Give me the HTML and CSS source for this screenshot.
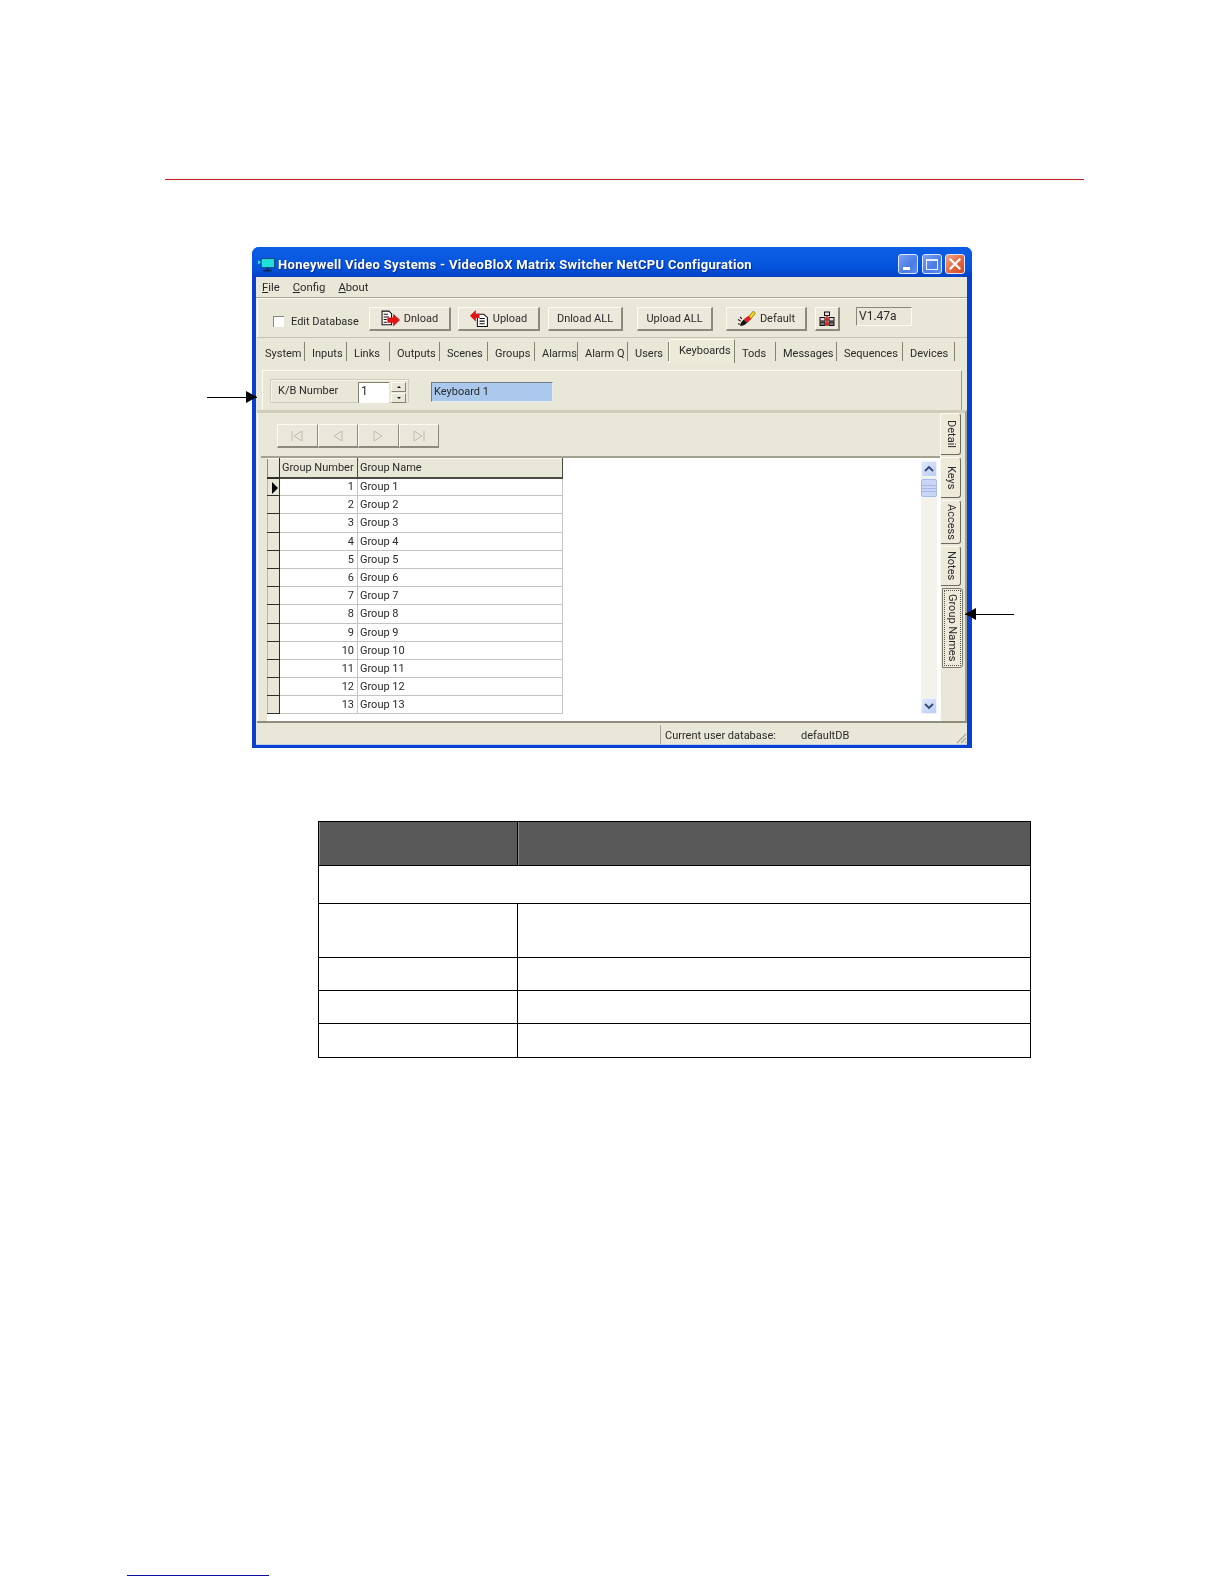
FILE: index.html
```html
<!DOCTYPE html>
<html lang="en">
<head>
<meta charset="utf-8">
<title>VideoBloX Matrix Switcher NetCPU Configuration</title>
<link rel="stylesheet" href="styles.css">
</head>
<body>
<div class="page">
  <div class="rule"></div>

  <div class="window">
    <div class="titlebar">
      <svg class="app-icon" viewBox="0 0 16 13" aria-hidden="true"><path d="M0 2l3 2-3 2z" fill="#3fe0e0"/><rect x="3" y="0.5" width="12.5" height="8.5" fill="#1fe0d8" stroke="#063a70" stroke-width=".8"/><path d="M8 9h2v2h3v1.5H5V11h3z" fill="#062a50"/></svg>
      <span class="title-text">Honeywell Video Systems - VideoBloX Matrix Switcher NetCPU Configuration</span>
      <div class="caption-btns">
        <span class="cap cap-min"><i class="min-glyph"></i></span>
        <span class="cap cap-max"><i class="max-glyph"></i></span>
        <span class="cap cap-close">
          <svg viewBox="0 0 20 20" aria-hidden="true"><path d="M5 5l10 10M15 5L5 15" stroke="#fff" stroke-width="2.4" stroke-linecap="square"/></svg>
        </span>
      </div>
    </div>

    <div class="menu">
      <span class="menu-item"><u>F</u>ile</span>
      <span class="menu-item"><u>C</u>onfig</span>
      <span class="menu-item"><u>A</u>bout</span>
    </div>

    <div class="toolbar">
      <label class="check"><span class="check-box"></span>Edit Database</label>
      <div class="btn w-dn">
        <svg class="btn-icon" viewBox="0 0 18 16" aria-hidden="true"><path d="M1 1h6.500l2.500 2.500V14H1z" fill="#fff" stroke="#111"/><path d="M2.500 4h4M2.500 6.500h5M2.500 9h3M2.500 11.500h3" stroke="#111"/><path d="M6 7h5.500V3.500L18 9.500l-6.500 6v-3.500H6z" fill="#e01414"/></svg>
        Dnload
      </div>
      <div class="btn w-up">
        <svg class="btn-icon" viewBox="0 0 18 16" aria-hidden="true"><path d="M7 4h6l3.500 3v8.500H7z" fill="#fff" stroke="#111"/><path d="M9 8h5M9 10.500h5M9 13h5" stroke="#111"/><path d="M0 5.500L5.500 0v3.500H9v4H5.500V11z" fill="#e01414"/></svg>
        Upload
      </div>
      <div class="btn w-dnall">Dnload ALL</div>
      <div class="btn w-upall">Upload ALL</div>
      <div class="btn w-def">
        <svg class="btn-icon" viewBox="0 0 18 16" aria-hidden="true"><path d="M11 6l4.500-5 2 2L13 8.500z" fill="#f4d21c" stroke="#6d5a00" stroke-width=".6"/><path d="M6.500 8.500L11 5.500 13.500 8.500l-4 4z" fill="#e02020"/><path d="M3 15c0-2 1-4 3.500-6l3 3c-2 2-4 3-6.500 3z" fill="#111"/><path d="M1 9l2.500 1.500M3 6.500l1.500 2M1 13l2 .5" stroke="#111"/></svg>
        Default
      </div>
      <div class="btn w-net">
        <svg class="net-icon" viewBox="0 0 16 16" aria-hidden="true"><rect x="5.500" y="1" width="5" height="3.500" fill="#ddd" stroke="#111"/><rect x="1" y="6.500" width="5" height="3.500" fill="#ddd" stroke="#111"/><rect x="10" y="6.500" width="5" height="3.500" fill="#ddd" stroke="#111"/><rect x="1" y="11" width="5" height="3.500" fill="#777" stroke="#111"/><rect x="10" y="11" width="5" height="3.500" fill="#777" stroke="#111"/><path d="M8 4.500V15M6 8.500h4M6 13h4" stroke="#e01414" stroke-width="1.600"/></svg>
      </div>
      <div class="version">V1.47a</div>
    </div>

    <div class="tabs">
      <span class="tab">System</span>
      <span class="tab">Inputs</span>
      <span class="tab">Links</span>
      <span class="tab">Outputs</span>
      <span class="tab">Scenes</span>
      <span class="tab">Groups</span>
      <span class="tab">Alarms</span>
      <span class="tab">Alarm Q</span>
      <span class="tab">Users</span>
      <span class="tab tab-active">Keyboards</span>
      <span class="tab">Tods</span>
      <span class="tab">Messages</span>
      <span class="tab">Sequences</span>
      <span class="tab">Devices</span>
    </div>

    <div class="kb-panel">
      <div class="kb-group">
        <span class="kb-label">K/B Number</span>
        <span class="spin-edit">1</span>
        <span class="spin-btns"><i class="spin-btn"><b class="spin-up"></b></i><i class="spin-btn"><b class="spin-down"></b></i></span>
      </div>
      <div class="kb-name">Keyboard 1</div>
    </div>

    <div class="pages">
      <div class="sheet">
        <div class="nav">
          <span class="nav-btn"><svg viewBox="0 0 14 12" aria-hidden="true"><path d="M2 1v10M12 1L4 6l8 5z" fill="none" stroke="#c0bdab"/></svg></span>
          <span class="nav-btn"><svg viewBox="0 0 14 12" aria-hidden="true"><path d="M11 1L3 6l8 5z" fill="none" stroke="#c0bdab"/></svg></span>
          <span class="nav-btn"><svg viewBox="0 0 14 12" aria-hidden="true"><path d="M3 1l8 5-8 5z" fill="none" stroke="#c0bdab"/></svg></span>
          <span class="nav-btn"><svg viewBox="0 0 14 12" aria-hidden="true"><path d="M12 1v10M2 1l8 5-8 5z" fill="none" stroke="#c0bdab"/></svg></span>
        </div>
        <div class="grid-wrap">
          <table class="grid">
            <thead>
              <tr><th class="sel"></th><th class="h-num">Group Number</th><th class="h-name">Group Name</th></tr>
            </thead>
            <tbody>
              <tr><td class="sel"><i class="pointer"></i></td><td class="num">1</td><td>Group 1</td></tr>
              <tr><td class="sel"></td><td class="num">2</td><td>Group 2</td></tr>
              <tr><td class="sel"></td><td class="num">3</td><td>Group 3</td></tr>
              <tr><td class="sel"></td><td class="num">4</td><td>Group 4</td></tr>
              <tr><td class="sel"></td><td class="num">5</td><td>Group 5</td></tr>
              <tr><td class="sel"></td><td class="num">6</td><td>Group 6</td></tr>
              <tr><td class="sel"></td><td class="num">7</td><td>Group 7</td></tr>
              <tr><td class="sel"></td><td class="num">8</td><td>Group 8</td></tr>
              <tr><td class="sel"></td><td class="num">9</td><td>Group 9</td></tr>
              <tr><td class="sel"></td><td class="num">10</td><td>Group 10</td></tr>
              <tr><td class="sel"></td><td class="num">11</td><td>Group 11</td></tr>
              <tr><td class="sel"></td><td class="num">12</td><td>Group 12</td></tr>
              <tr><td class="sel"></td><td class="num">13</td><td>Group 13</td></tr>
            </tbody>
          </table>
          <div class="scrollbar">
            <span class="sb-btn"><svg viewBox="0 0 10 8" aria-hidden="true"><path d="M1 6l4-4 4 4" fill="none" stroke="#34487a" stroke-width="1.800"/></svg></span>
            <span class="sb-thumb"></span>
            <span class="sb-track"></span>
            <span class="sb-btn"><svg viewBox="0 0 10 8" aria-hidden="true"><path d="M1 2l4 4 4-4" fill="none" stroke="#34487a" stroke-width="1.800"/></svg></span>
          </div>
        </div>
      </div>
      <div class="side-tabs">
        <span class="side-tab st-detail">Detail</span>
        <span class="side-tab st-keys">Keys</span>
        <span class="side-tab st-access">Access</span>
        <span class="side-tab st-notes">Notes</span>
        <span class="side-tab st-group"><em class="focus">Group Names</em></span>
      </div>
    </div>

    <div class="status">
      <span class="status-a"></span>
      <span class="status-b">Current user database:</span>
      <span class="status-c">defaultDB</span>
      <svg class="grip" viewBox="0 0 12 12" aria-hidden="true"><path d="M11 2L2 11M11 6l-5 5M11 10l-1 1" stroke="#a9a695" stroke-width="1.200"/></svg>
    </div>
  </div>

  <div class="arrow arrow-left"></div>
  <div class="arrow arrow-right"></div>

  <table class="doc">
    <tr class="d-head"><th class="d-a"></th><th></th></tr>
    <tr class="d-r1"><td colspan="2"></td></tr>
    <tr class="d-r2"><td></td><td></td></tr>
    <tr class="d-r3"><td></td><td></td></tr>
    <tr class="d-r3"><td></td><td></td></tr>
    <tr class="d-r4"><td></td><td></td></tr>
  </table>

  <div class="foot-rule"></div>
</div>
</body>
</html>
```
FILE: styles.css
```css
* { box-sizing: border-box; }
html, body { margin: 0; padding: 0; background: #fff; }
body { font-family: Roboto, "Liberation Sans", Arial, sans-serif; font-size: 11px; color: #2a2a2a; }

.page { position: relative; width: 1224px; height: 1584px; overflow: hidden; padding-top: 179px; }
.rule { width: 919px; height: 1px; margin-left: 165px; background: #c02224; box-shadow: 0 0 1px rgba(225,110,110,.6); }

/* window */
.window {
  width: 720px; height: 501px; margin: 67px 0 0 252px;
  display: flex; flex-direction: column;
  background: #e9e7d8; border-radius: 7px 7px 0 0;
  border-left: 4px solid #0a40d0; border-right: 5px solid #0a40d0; border-bottom: 3px solid #0a40d0;
  filter: blur(.35px);
}
.titlebar {
  height: 30px; margin: 0 -5px 0 -4px; padding: 5px 7px 0 6px;
  display: flex; align-items: center;
  background: linear-gradient(#0a5ae6, #0c5ce4 12%, #0553dc 70%, #0341c4);
  border-radius: 7px 7px 0 0;
}
.app-icon { width: 17px; height: 14px; flex: none; }
.title-text { margin-left: 3px; color: #fff; font-weight: bold; font-size: 13px; letter-spacing: .31px; white-space: nowrap; text-shadow: 1px 1px 1px #0a2a90; }
.caption-btns { margin-left: auto; display: flex; gap: 3.500px; margin-top: -2px; }
.cap { width: 20px; height: 20px; border: 1px solid #dfe8fb; border-radius: 3px; display: flex; background: linear-gradient(135deg, #7ba0f2, #4a7be6 60%, #5f8cf0); }
.cap-close { background: linear-gradient(135deg, #f3a588, #e2623c 60%, #cf4a24); }
.min-glyph { width: 7px; height: 3px; background: #fff; margin: 12px 0 0 4px; }
.max-glyph { width: 12px; height: 11px; border: 1px solid #e8eefc; border-top-width: 2px; margin: 4px 0 0 3px; }

.menu { height: 21px; padding-left: 6px; display: flex; align-items: center; gap: 13px; border-bottom: 1px solid #a7a596; font-size: 11.300px; }

.toolbar { height: 40px; padding: 9px 0 0 16px; display: flex; align-items: flex-start; border-bottom: 1px solid #c6c3b2; box-shadow: inset 1px 1px 0 #fbfaf3; margin-left: 1px; }
.check { width: 96px; margin-top: 8px; display: flex; align-items: center; gap: 7px; height: 13px; white-space: nowrap; }
.check-box { width: 11px; height: 11px; background: #fff; border-top: 1px solid #8a8878; border-left: 1px solid #8a8878; flex: none; }
.btn { height: 24px; display: flex; align-items: center; justify-content: center; gap: 4px; background: #ece9dc; border-top: 1px solid #fbfaf3; border-left: 1px solid #fbfaf3; border-right: 2px solid #8c8a7a; border-bottom: 2px solid #8c8a7a; }
.btn-icon { width: 19px; height: 17px; flex: none; }
.net-icon { width: 16px; height: 16px; }
.w-dn { width: 82px; margin-right: 7px; }
.w-up { width: 82px; margin-right: 8px; }
.w-dnall { width: 75px; margin-right: 14px; }
.w-upall { width: 76px; margin-right: 13px; }
.w-def { width: 81px; margin-right: 8px; }
.w-net { width: 25px; margin-right: 16px; }
.version { width: 56px; height: 19px; padding: 0 0 0 2px; font-size: 12px; line-height: 16px; border-top: 1px solid #8a8878; border-left: 1px solid #8a8878; border-right: 1px solid #fbfaf3; border-bottom: 1px solid #fbfaf3; }

.tabs { height: 32px; padding: 4px 0 0 2px; display: grid; grid-template-columns: 47px 42px 43px 50px 48px 47px 43px 50px 41px 66px 41px 61px 66px 52px; align-items: start; }
.tab { height: 19px; padding-left: 7px; line-height: 23px; white-space: nowrap; border-right: 1px solid #85836f; }
.tab-active { height: 24px; margin-top: -3px; padding-left: 9px; line-height: 22px; background: #ecead9; border-top: 1px solid #fbfaf3; border-left: 1px solid #fbfaf3; border-radius: 2px 0 0 0; }

.kb-panel { height: 40px; margin: 0 5px 0 6px; padding: 8px 0 0 7px; display: flex; align-items: flex-start; border-top: 1px solid #fbfaf3; border-left: 1px solid #fbfaf3; border-right: 1px solid #9b9988; }
.kb-group { width: 139px; height: 24px; padding-left: 7px; display: flex; align-items: center; border: 1px solid #cfccbb; box-shadow: inset 1px 1px 0 #f7f6ee; }
.kb-label { width: 80px; margin-top: -1px; }
.spin-edit { width: 31px; height: 21px; margin: 2px 2px 0 0; padding-left: 2px; line-height: 17px; font-size: 12px; background: #fff; border-top: 1px solid #85836f; border-left: 1px solid #85836f; }
.spin-btns { width: 15px; height: 21px; margin-top: 2px; display: flex; flex-direction: column; gap: 1px; }
.spin-btn { flex: 1; display: flex; align-items: center; justify-content: center; border-right: 1px solid #85836f; border-bottom: 1px solid #85836f; border-top: 1px solid #fbfaf3; border-left: 1px solid #fbfaf3; }
.spin-up { width: 0; height: 0; border: 2px solid transparent; border-top: 0; border-bottom: 2px solid #111; }
.spin-down { width: 0; height: 0; border: 2px solid transparent; border-bottom: 0; border-top: 2px solid #111; }
.kb-name { width: 122px; height: 20px; margin: 3px 0 0 22px; padding-left: 2px; line-height: 17px; background: #a9c8ec; border-top: 1px solid #6e7a86; border-left: 1px solid #6e7a86; border-right: 1px solid #e6edf3; border-bottom: 1px solid #e6edf3; }

.pages { flex: 1; margin-left: 1px; display: flex; border-top: 3px solid #d0cdbc; box-shadow: inset 1px 0 0 #fbfaf3; position: relative; border-bottom: 2px solid #8f8d7c; border-right: 2px solid #a3a190; }
.sheet { width: 679px; margin-left: 4px; display: flex; flex-direction: column; padding-top: 4px; }
.nav { height: 41px; padding: 7px 0 0 16px; display: flex; border-bottom: 2px solid #a3a190; flex: none; }
.nav-btn { width: 40.500px; height: 24px; display: flex; align-items: center; justify-content: center; background: #ebe8db; border-top: 1px solid #fbfaf3; border-left: 1px solid #fbfaf3; border-right: 1px solid #8c8a7a; border-bottom: 2px solid #8c8a7a; }
.nav-btn svg { width: 14px; height: 12px; }

.grid-wrap { flex: 1; min-height: 0; margin: 0 0 0 6px; background: #fff; display: flex; position: relative; overflow: hidden; }
.grid { width: 296px; flex: none; align-self: flex-start; border-collapse: collapse; table-layout: fixed; font-size: 11px; }
.grid th { height: 19px; padding: 0 0 0 2px; font-weight: normal; text-align: left; background: #e9e7d8; border-top: 1px solid #fbfaf3; border-right: 1px solid #4d4c42; border-bottom: 2px solid #4d4c42; white-space: nowrap; }
.grid td { height: 18.200px; padding: 0 0 0 2px; border-right: 1px solid #c4c4c0; border-bottom: 1px solid #c4c4c0; white-space: nowrap; }
.grid .sel { width: 12px; padding: 0; background: #e9e7d8; border-right: 1px solid #2f2e28; border-bottom: 1px solid #2f2e28; position: relative; }
.grid th.sel { border-bottom-width: 2px; border-left: 1px solid #8c8a7a; }
.grid td.sel { border-left: 1px solid #b8b6a6; }
.h-num { width: 78px; }
.grid .num { text-align: right; padding: 0 3px 0 0; }
.pointer { position: absolute; left: 4px; top: 3px; width: 0; height: 0; border-left: 6px solid #000; border-top: 6px solid transparent; border-bottom: 6px solid transparent; }

.scrollbar { width: 16px; height: 253px; margin: 3px 3px 0 auto; display: flex; flex-direction: column; background: #f3f3ec; }
.sb-btn { height: 16px; display: flex; align-items: center; justify-content: center; background: linear-gradient(135deg, #dfe8fb, #bccdf3); border: 1px solid #eef2fb; border-radius: 2px; flex: none; }
.sb-btn svg { width: 10px; height: 8px; }
.sb-thumb { height: 18px; margin-top: 2px; background: #c9d6f6; border: 1px solid #a8bcec; border-radius: 2px; flex: none; box-shadow: inset 0 5px 0 #c9d6f6, inset 0 6px 0 #a4b7e6, inset 0 8px 0 #c9d6f6, inset 0 9px 0 #a4b7e6, inset 0 11px 0 #c9d6f6, inset 0 12px 0 #a4b7e6; }
.sb-track { flex: 1; }

.side-tabs { width: 22px; flex: none; display: flex; flex-direction: column; gap: 2px; border-left: 1px solid #fbfaf3; align-self: stretch; }
.side-tab { width: 20px; writing-mode: vertical-rl; text-align: center; display: block; line-height: 18px; white-space: nowrap; background: #ecead9; border-right: 1px solid #6c6a5c; border-bottom: 1px solid #6c6a5c; border-top: 1px solid #fbfaf3; border-radius: 0 3px 3px 0; }
.st-detail { height: 42px; }
.st-keys { height: 41px; }
.st-access { height: 44px; }
.st-notes { height: 40px; }
.st-group { height: 80px; width: 21px; margin-left: 1px; padding: 1px; display: flex; background: #ecead9; border: 1px solid #7d7b6c; }
.focus { font-style: normal; display: block; width: 100%; height: 100%; line-height: 16px; text-align: center; white-space: nowrap; border: 1px dotted #55544a; }

.status { height: 22px; margin-top: auto; padding-top: 3px; display: flex; align-items: center; position: relative; box-shadow: inset 0 -1px 0 #bcd0ee; }
.status-a { width: 405px; height: 100%; margin-top: -3px; border-right: 1px solid #a7a596; }
.status-b { margin-left: 4px; width: 136px; }
.grip { position: absolute; right: 0; bottom: 1px; width: 12px; height: 12px; }

/* callout arrows */
.arrow { position: absolute; height: 1px; background: #000; }
.arrow::after { content: ""; position: absolute; top: -6px; width: 0; height: 0; border-top: 6.500px solid transparent; border-bottom: 6.500px solid transparent; }
.arrow-left { left: 207px; top: 397px; width: 50px; }
.arrow-left::after { right: 0; border-left: 11px solid #000; }
.arrow-right { left: 965px; top: 614px; width: 49px; }
.arrow-right::after { left: 0; border-right: 11px solid #000; }

/* empty document table */
.doc { width: 713px; height: 237px; margin: 73px 0 0 318px; border-collapse: collapse; table-layout: fixed; }
.doc th, .doc td { padding: 0; border: 1px solid #000; }
.doc th { background: #595959; box-shadow: inset 1px 0 0 #8e8e8e; }
.d-a { width: 199px; }
.d-head { height: 44px; }
.d-r1 { height: 38px; }
.d-r2 { height: 54px; }
.d-r3 { height: 33px; }
.d-r4 { height: 34px; }

.foot-rule { width: 142px; height: 1px; margin: 517px 0 0 127px; background: #0c0ca0; }
```
